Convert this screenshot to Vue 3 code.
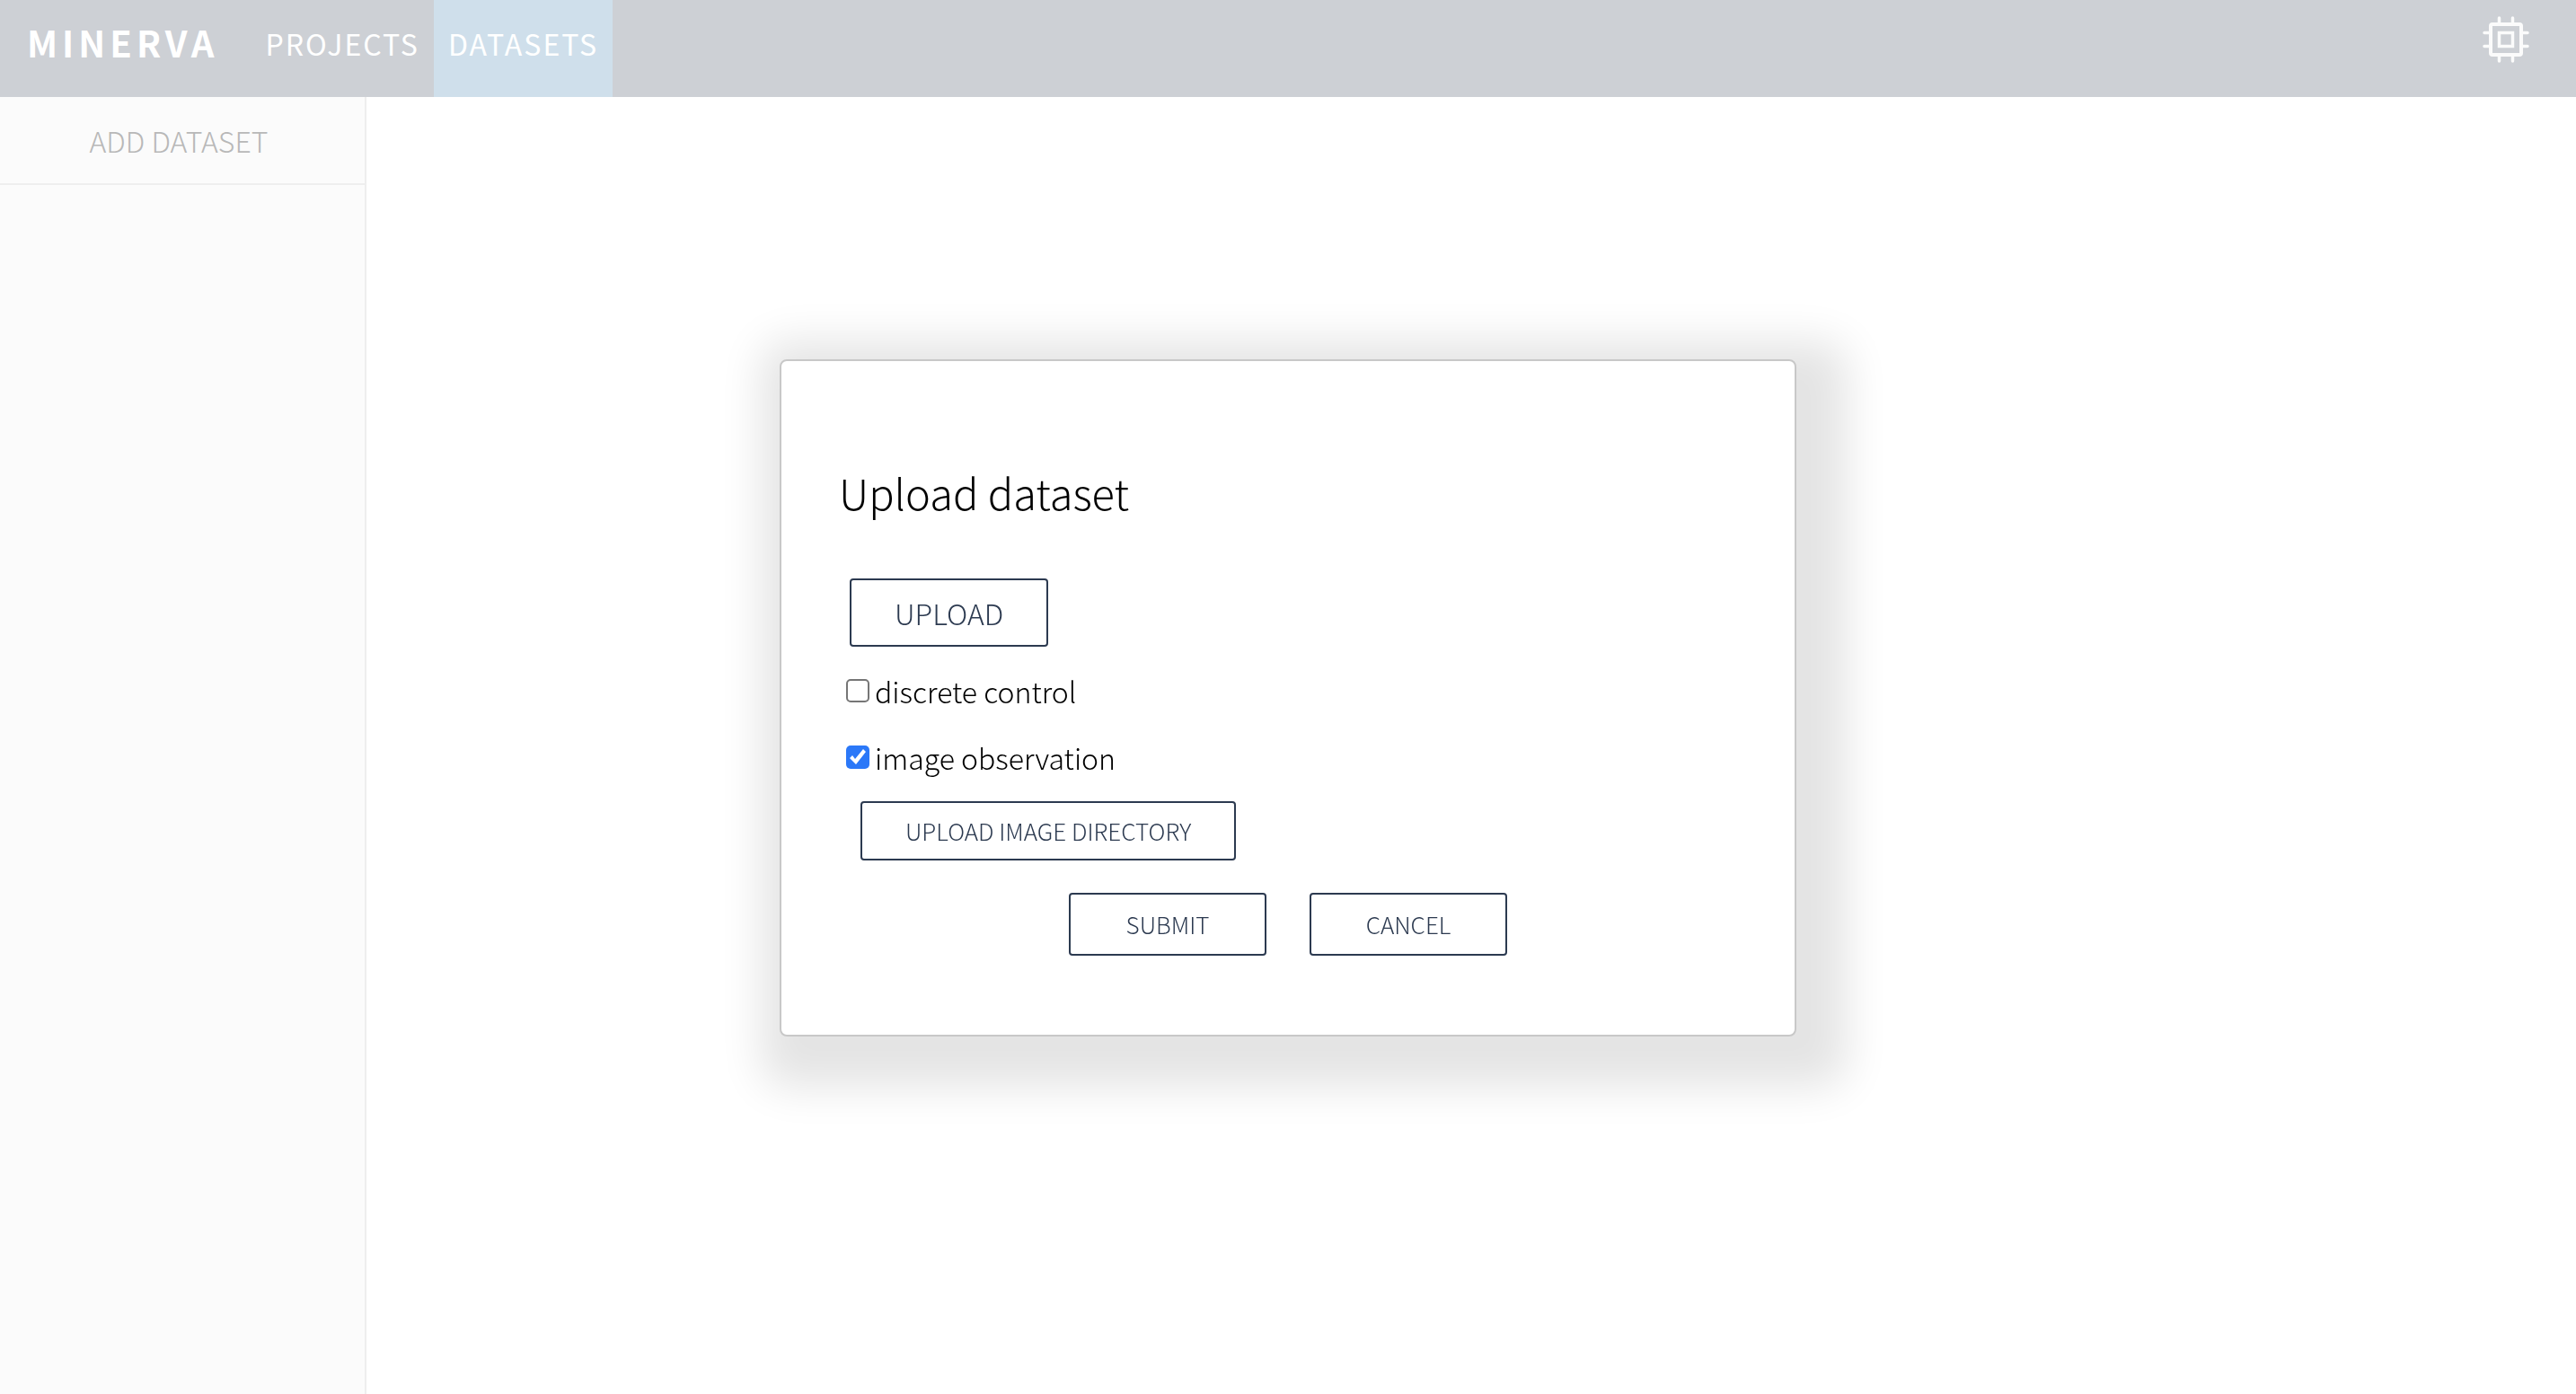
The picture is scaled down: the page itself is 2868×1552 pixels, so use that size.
<script setup>
import { ref } from 'vue'

const discreteControl = ref(false)
const imageObservation = ref(true)
</script>

<template>
  <div class="page">
    <header class="topbar">
      <a class="brand" href="#">MINERVA</a>
      <nav class="nav">
        <a class="nav-link" href="#">PROJECTS</a>
        <a class="nav-link active" href="#">DATASETS</a>
      </nav>
      <button class="chip" type="button" aria-label="Resources">
        <svg viewBox="0 0 52 52" width="52" height="52" fill="none" stroke="currentColor">
          <rect x="9" y="9" width="34" height="34" rx="2" stroke-width="4" />
          <rect x="18.500" y="18.500" width="15" height="15" stroke-width="3.500" />
          <path
            d="M18.500 2v6M33.500 2v6M18.500 44v6M33.500 44v6M2 18.500h6M2 33.500h6M44 18.500h6M44 33.500h6"
            stroke-width="3.500"
            stroke-linecap="round"
          />
        </svg>
      </button>
    </header>

    <div class="body">
      <aside class="sidebar">
        <button class="add" type="button">ADD DATASET</button>
      </aside>
      <main class="content"></main>
    </div>

    <div class="overlay">
      <form class="dialog" role="dialog" aria-labelledby="dialog-title" @submit.prevent>
        <h1 id="dialog-title" class="title">Upload dataset</h1>
        <button class="btn upload" type="button">UPLOAD</button>
        <div class="checks">
          <label class="check"><input v-model="discreteControl" type="checkbox" />discrete control</label>
          <label class="check"><input v-model="imageObservation" type="checkbox" />image observation</label>
        </div>
        <button v-if="imageObservation" class="btn directory" type="button">UPLOAD IMAGE DIRECTORY</button>
        <div class="actions">
          <button class="btn action" type="submit">SUBMIT</button>
          <button class="btn action" type="button">CANCEL</button>
        </div>
      </form>
    </div>
  </div>
</template>

<style>
body {
  margin: 0;
  background: #fff;
}
</style>

<style scoped>
.page {
  display: flex;
  flex-direction: column;
  min-height: 100vh;
  font-family: "Source Sans Pro", "Noto Sans CJK SC", sans-serif;
  font-weight: 300;
  font-size: 32px;
  line-height: 40px;
}

button {
  font: inherit;
  cursor: pointer;
}

.topbar {
  display: flex;
  align-items: stretch;
  height: 108px;
  background: #cdd0d5;
  color: #fff;
}

.brand {
  padding: 0 36px 0 30px;
  color: #fff;
  font-size: 40px;
  font-weight: 700;
  line-height: 94px;
  letter-spacing: 5px;
  text-decoration: none;
}

.nav {
  display: flex;
}

.nav-link {
  padding: 0 16px;
  color: #fff;
  font-weight: 400;
  line-height: 96px;
  letter-spacing: 2px;
  text-decoration: none;
}

.nav-link.active {
  background: #cfdfeb;
}

.chip {
  align-self: flex-start;
  display: flex;
  margin: 18px 52px 0 auto;
  padding: 0;
  border: 0;
  background: none;
  color: #fbfbfb;
}

.body {
  display: flex;
  flex: 1;
}

.sidebar {
  box-sizing: border-box;
  width: 408px;
  border-right: 2px solid #eee;
  background: #fbfbfb;
}

.add {
  width: 100%;
  height: 98px;
  padding: 0 8px 0 0;
  border: 0;
  border-bottom: 2px solid #eee;
  background: none;
  color: #b8b8b8;
}

.content {
  flex: 1;
}

.overlay {
  position: fixed;
  inset: 0;
  display: grid;
  place-items: center;
  padding-top: 2px;
}

.dialog {
  box-sizing: border-box;
  display: flex;
  flex-direction: column;
  align-items: flex-start;
  width: min(1132px, 90vw);
  padding: 110px 64px 88px;
  border: 2px solid #c8c8c8;
  border-radius: 8px;
  background: #fff;
  color: #000;
  box-shadow: 18px 18px 48px 38px rgba(0, 0, 0, 0.11);
}

.title {
  margin: 0 0 60px;
  font-size: 47px;
  font-weight: 300;
  line-height: 72px;
}

.btn {
  padding: 0 48px;
  border: 2px solid #2c3a50;
  border-radius: 4px;
  background: #fff;
  color: #2c3a50;
}

.upload {
  height: 76px;
  margin-left: 12px;
}

.checks {
  display: flex;
  flex-direction: column;
  gap: 34px;
  margin: 29px 0 29px 8px;
}

.check {
  display: flex;
  align-items: center;
  gap: 6px;
}

.check input {
  appearance: none;
  box-sizing: border-box;
  width: 26px;
  height: 26px;
  margin: 0;
  border: 2px solid #767676;
  border-radius: 5px;
  background: #fff;
}

.check input:checked {
  border: 0;
  background: #2b78f8;
}

.check input:checked::before {
  content: "";
  display: block;
  width: 26px;
  height: 26px;
  background: #fff;
  clip-path: polygon(4px 14px, 7px 11px, 10px 15px, 19px 4px, 22px 7px, 11px 21px);
}

.directory {
  height: 66px;
  margin-left: 24px;
  font-size: 26px;
}

.actions {
  display: flex;
  align-self: center;
  gap: 48px;
  margin-top: 36px;
}

.action {
  width: 220px;
  height: 70px;
  font-size: 26px;
}
</style>
